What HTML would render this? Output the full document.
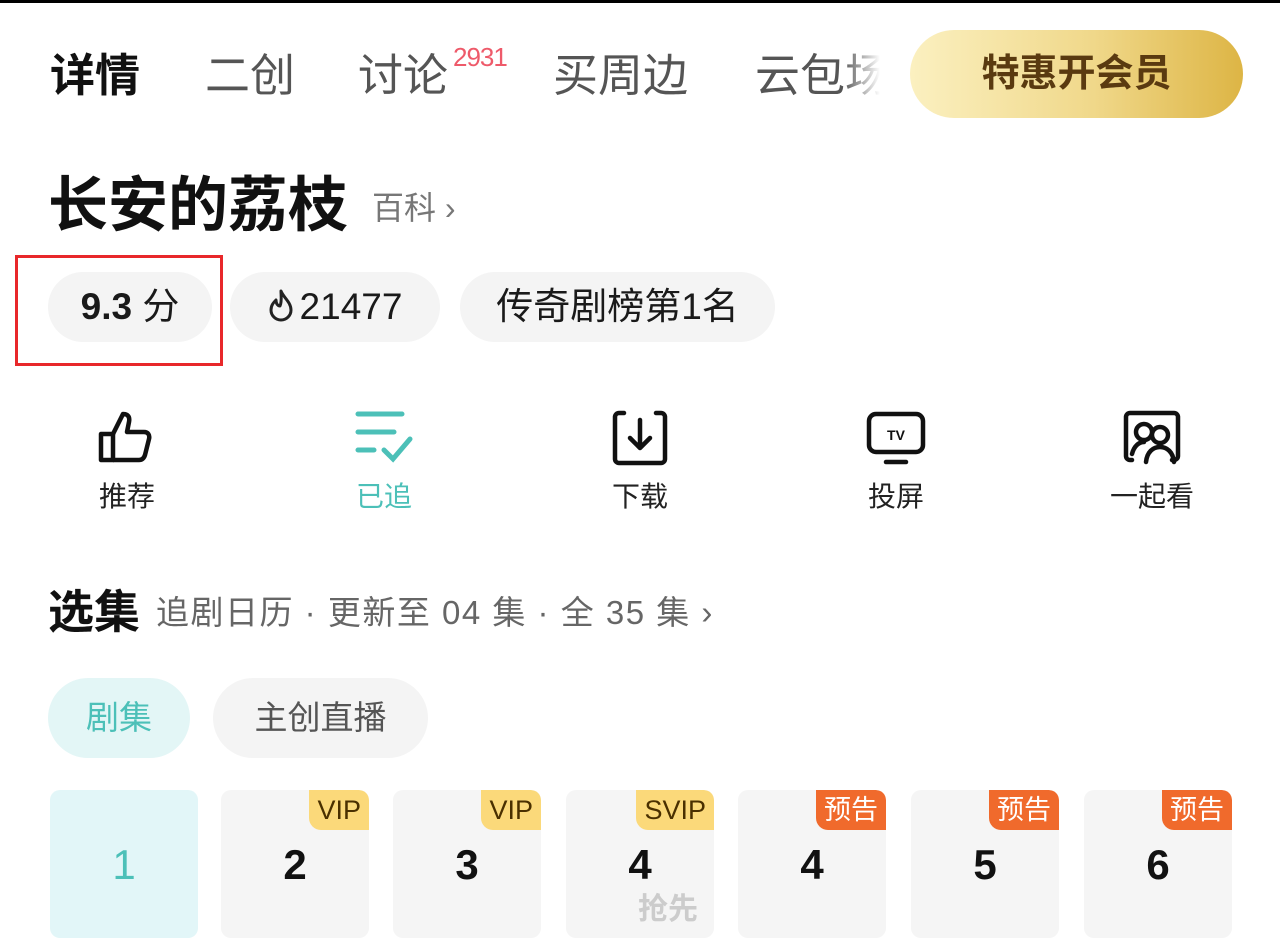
<!DOCTYPE html>
<html><head><meta charset="utf-8"><style>
*{margin:0;padding:0;box-sizing:border-box}
body{width:1280px;height:946px;background:#fff;position:relative;overflow:hidden;font-family:"Liberation Sans","Noto Sans CJK SC",sans-serif;color:#111}
.a{position:absolute;white-space:nowrap}
.tab{font-size:45px;color:#555;top:47px;line-height:58px}
.chip{position:absolute;top:272px;height:70px;border-radius:35px;background:#f4f4f4;font-size:37px;line-height:70px;text-align:center;color:#1a1a1a}
.ic{position:absolute;top:408px;width:60px;height:60px}
.lb{position:absolute;top:478px;font-size:28px;line-height:38px;width:200px;text-align:center;color:#222}
.ep{position:absolute;top:790px;width:148px;height:148px;border-radius:10px;background:#f5f5f5;font-size:42px;font-weight:bold;text-align:center;line-height:150px;overflow:hidden}
.bd{position:absolute;top:0;right:0;height:40px;padding:0 8px;border-radius:0 10px 0 12px;font-size:27px;line-height:40px;font-weight:normal}
.v{background:#fbd97a;color:#4a3000}
.p{background:#f06a2c;color:#fff}
</style></head><body>
<div class="a" style="left:0;top:0;width:1280px;height:3px;background:#000"></div>
<div class="a tab" style="left:50px;color:#111;font-weight:bold">详情</div>
<div class="a tab" style="left:205px">二创</div>
<div class="a tab" style="left:358px">讨论</div>
<div class="a" style="left:453px;top:42px;font-size:26px;color:#ee5a6a;letter-spacing:-1px">2931</div>
<div class="a tab" style="left:553px">买周边</div>
<div class="a tab" style="left:755px;width:125px;overflow:hidden;-webkit-mask-image:linear-gradient(90deg,#000 70%,transparent)">云包场</div>
<div class="a" style="left:910px;top:30px;width:333px;height:88px;border-radius:44px;background:linear-gradient(90deg,#fbf0c0,#f0d88a 55%,#ddb545);font-size:38px;font-weight:bold;color:#5a3a10;text-align:center;line-height:88px">特惠开会员</div>
<div class="a" style="left:48px;top:170px;font-size:60px;font-weight:bold;line-height:72px">长安的荔枝</div>
<div class="a" style="left:372px;top:186px;font-size:32px;color:#777;line-height:44px">百科 ›</div>
<div class="chip" style="left:48px;width:164px"><b style="font-weight:600">9.3</b> 分</div>
<div class="chip" style="left:230px;width:210px"><svg width="26" height="34" viewBox="0 0 26 34" style="vertical-align:-3px;margin-right:6px"><path d="M13 3C15 9 23 14 23 22a10 10 0 0 1-20 0c0-5 3-8 5-10 0 4 2 6 4 6 2-4 1-11 1-15z" fill="none" stroke="#222" stroke-width="3" stroke-linejoin="round"/></svg>21477</div>
<div class="chip" style="left:460px;width:315px">传奇剧榜第1名</div>
<div class="a" style="left:15px;top:255px;width:208px;height:111px;border:3px solid #e8282a"></div>
<svg class="ic" style="left:97px" viewBox="0 0 60 60" fill="none" stroke="#111" stroke-width="4.5" stroke-linejoin="round"><path d="M4 26h12v26H4z"/><path d="M16 26l10-20c5 0 7 3 6 8l-2 10h17c4 0 6 3 5 7l-4 16c-1 3-3 5-6 5H16"/></svg>
<div class="lb" style="left:27px">推荐</div>
<svg class="ic" style="left:354px" viewBox="0 0 60 60" stroke="#4cc0b8" stroke-width="5" stroke-linecap="round" fill="none"><path d="M4 6h44M4 24h36M4 42h16M30 42l9 9 17-20"/></svg>
<div class="lb" style="left:284px;color:#4cc0b8">已追</div>
<svg class="ic" style="left:610px" viewBox="0 0 60 60" fill="none" stroke="#111" stroke-width="4.5" stroke-linecap="round" stroke-linejoin="round"><path d="M14 5H9a4 4 0 0 0-4 4v42a4 4 0 0 0 4 4h42a4 4 0 0 0 4-4V9a4 4 0 0 0-4-4h-5"/><path d="M30 12v28M20 30l10 10 10-10"/></svg>
<div class="lb" style="left:540px">下载</div>
<svg class="ic" style="left:866px" viewBox="0 0 60 60" fill="none" stroke="#111" stroke-width="4.5" stroke-linecap="round"><rect x="3" y="6" width="54" height="38" rx="7"/><path d="M20 54h20"/><text x="30" y="32" font-size="14" font-weight="bold" text-anchor="middle" fill="#111" stroke="none" font-family="Liberation Sans">TV</text></svg>
<div class="lb" style="left:796px">投屏</div>
<svg class="ic" style="left:1122px" viewBox="0 0 60 60" fill="none" stroke="#111" stroke-width="4.5" stroke-linecap="round" stroke-linejoin="round"><path d="M10 52H8a4 4 0 0 1-4-4V9a4 4 0 0 1 4-4h44a4 4 0 0 1 4 4v39a4 4 0 0 1-4 4h-2"/><circle cx="22" cy="24" r="8"/><path d="M10 46c2-8 7-12 12-12"/><circle cx="38" cy="27" r="8"/><path d="M24 54c1-10 7-15 14-15s13 5 14 15"/></svg>
<div class="lb" style="left:1052px">一起看</div>
<div class="a" style="left:48px;top:583px;font-size:46px;font-weight:bold;line-height:58px">选集</div>
<div class="a" style="left:156px;top:591px;font-size:33px;color:#666;line-height:44px;letter-spacing:1.5px">追剧日历 · 更新至 04 集 · 全 35 集 ›</div>
<div class="a" style="left:48px;top:678px;width:142px;height:80px;border-radius:40px;background:#e3f6f6;color:#4cc0b8;font-size:33px;line-height:80px;text-align:center">剧集</div>
<div class="a" style="left:213px;top:678px;width:215px;height:80px;border-radius:40px;background:#f4f4f4;color:#555;font-size:33px;line-height:80px;text-align:center">主创直播</div>
<div class="ep" style="left:50px;background:#e2f6f8;color:#4cc0b8;font-weight:normal">1</div>
<div class="ep" style="left:221px">2<div class="bd v">VIP</div></div>
<div class="ep" style="left:393px">3<div class="bd v">VIP</div></div>
<div class="ep" style="left:566px">4<div class="bd v">SVIP</div><div class="a" style="left:72px;top:100px;font-size:30px;line-height:40px;color:#ccc">抢先</div></div>
<div class="ep" style="left:738px">4<div class="bd p">预告</div></div>
<div class="ep" style="left:911px">5<div class="bd p">预告</div></div>
<div class="ep" style="left:1084px">6<div class="bd p">预告</div></div>
</body></html>
